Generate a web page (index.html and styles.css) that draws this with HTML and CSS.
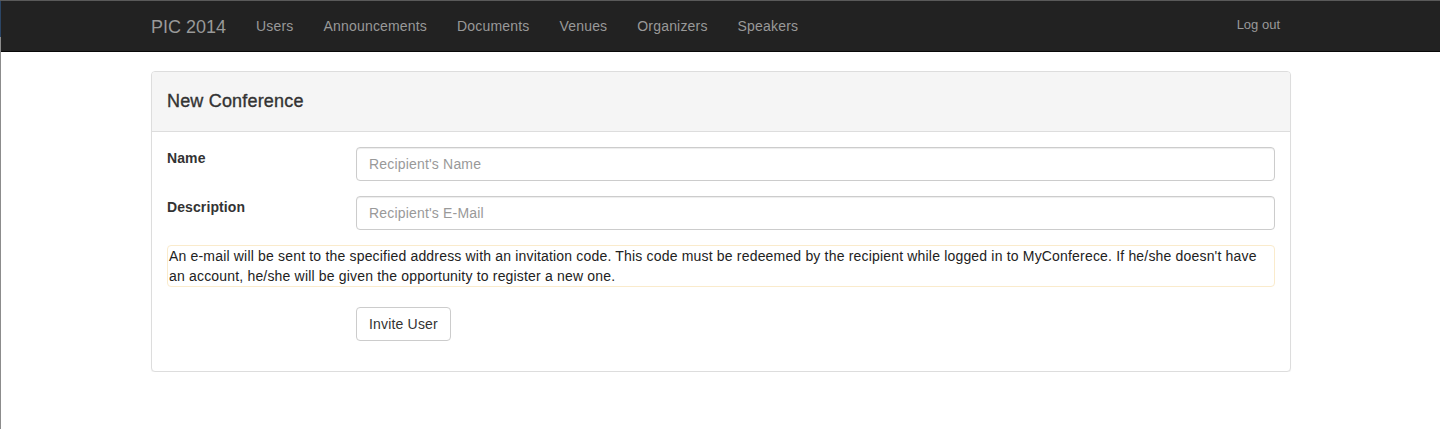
FILE: index.html
```html
<!DOCTYPE html>
<html>
<head>
<meta charset="utf-8">
<title>PIC 2014</title>
<link rel="stylesheet" href="styles.css">
</head>
<body>
<div class="edge"></div>
<nav class="navbar">
  <div class="container nav-inner">
    <a class="brand" href="#">PIC 2014</a>
    <ul class="nav-links">
      <li><a href="#">Users</a></li>
      <li><a href="#">Announcements</a></li>
      <li><a href="#">Documents</a></li>
      <li><a href="#">Venues</a></li>
      <li><a href="#">Organizers</a></li>
      <li><a href="#">Speakers</a></li>
    </ul>
    <a class="logout" href="#">Log out</a>
  </div>
</nav>
<main class="container">
  <section class="panel">
    <div class="panel-heading">New Conference</div>
    <form class="panel-body">
      <div class="form-group">
        <label class="label-col">Name</label>
        <div class="field-col"><input class="form-control" type="text" placeholder="Recipient's Name"></div>
      </div>
      <div class="form-group">
        <label class="label-col">Description</label>
        <div class="field-col"><input class="form-control" type="text" placeholder="Recipient's E-Mail"></div>
      </div>
      <div class="notice">An e-mail will be sent to the specified address with an invitation code. This code must be redeemed by the recipient while logged in to MyConferece. If he/she doesn't have an account, he/she will be given the opportunity to register a new one.</div>
      <div class="form-group">
        <div class="label-col"></div>
        <div class="field-col"><button class="btn" type="button">Invite User</button></div>
      </div>
    </form>
  </section>
</main>
</body>
</html>
```

FILE: styles.css
```css
* { box-sizing: border-box; }
html, body { margin: 0; padding: 0; }
body {
  font-family: "Liberation Sans", Arial, Helvetica, sans-serif;
  font-size: 14px;
  line-height: 20px;
  letter-spacing: 0.18px;
  color: #333;
  background: #fff;
}
.edge {
  position: fixed;
  left: 0;
  top: 0;
  width: 1px;
  height: 100%;
  background: linear-gradient(to bottom, #5a5a5a 0, #5a5a5a 1px, #2b4565 1px, #2b4565 37px, #8c8c8c 37px, #8c8c8c 100%);
}
.container {
  width: 1142px;
  padding-left: 2px;
  margin: 0 auto;
}
.navbar {
  background: #222;
  border-top: 1px solid #5a5a5a;
  border-bottom: 1px solid #080808;
  height: 52px;
}
.nav-inner {
  display: flex;
  align-items: center;
  height: 50px;
}
.navbar a { text-decoration: none; color: #999; }
.brand {
  font-size: 18px;
  line-height: 20px;
  letter-spacing: 0;
  padding: 15px 15px 15px 0;
  margin-top: 1px;
}
.nav-links {
  display: flex;
  list-style: none;
  margin: 0;
  padding: 0;
}
.nav-links a {
  display: block;
  padding: 15px 15px;
  line-height: 20px;
}
.logout {
  margin-left: auto;
  font-size: 13px;
  letter-spacing: 0;
  padding: 0 11px 2px 0;
}
.panel {
  margin-top: 19px;
  border: 1px solid #ddd;
  border-radius: 4px;
  box-shadow: 0 1px 1px rgba(0,0,0,0.05);
  background: #fff;
}
.panel-heading {
  background: #f5f5f5;
  border-bottom: 1px solid #ddd;
  border-radius: 3px 3px 0 0;
  height: 60px;
  padding: 19px 15px 0;
  font-size: 18px;
  line-height: 20px;
  font-weight: 500;
  -webkit-text-stroke: 0.35px #333;
  color: #333;
}
.panel-body {
  padding: 15px;
  margin: 0;
}
.form-group {
  display: flex;
  margin-bottom: 15px;
}
.label-col {
  width: 189px;
  flex: none;
  padding-top: 1px;
  font-weight: bold;
  letter-spacing: 0.1px;
}
.field-col { flex: 1; }
.form-control {
  display: block;
  width: 100%;
  height: 34px;
  padding: 6px 12px;
  font-family: inherit;
  font-size: 14px;
  line-height: 20px;
  letter-spacing: 0.18px;
  color: #555;
  border: 1px solid #ccc;
  border-radius: 4px;
  box-shadow: inset 0 1px 1px rgba(0,0,0,0.075);
  background: #fff;
}
.form-control::placeholder { color: #999; }
.notice {
  border: 1px solid #faebcc;
  border-radius: 4px;
  padding: 0 1px;
  margin-bottom: 20px;
  color: #222;
}
.btn {
  height: 34px;
  padding: 6px 12px;
  font-family: inherit;
  font-size: 14px;
  line-height: 20px;
  letter-spacing: 0.18px;
  color: #333;
  background: #fff;
  border: 1px solid #ccc;
  border-radius: 4px;
}
```
